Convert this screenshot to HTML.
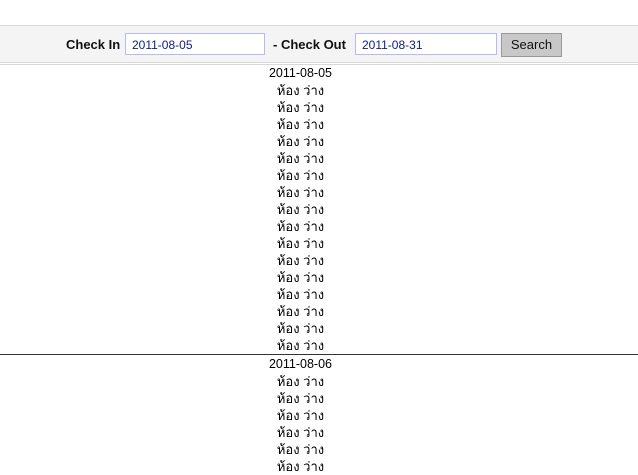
<!DOCTYPE html>
<html><head><meta charset="utf-8"><style>
body{margin:0;background:#fff;font-family:"Liberation Sans","DejaVu Sans",sans-serif;}
.bar{position:absolute;top:25px;left:0;width:638px;height:36px;background:#f4f4f4;border-top:1px solid #d8d8d8;border-bottom:1px solid #d8d8d8;}
.bar2{position:absolute;top:64px;left:0;width:638px;height:0;border-top:1px solid #d8d8d8;}
.lbl{position:absolute;top:37px;font-weight:bold;font-size:13px;color:#111;}
.inp{position:absolute;top:33px;width:140px;height:22px;border:1px solid #b8b8ff;background:#fff;font-size:12px;color:#102080;line-height:22px;padding-left:6px;box-sizing:border-box;}
.btn{position:absolute;top:33px;left:501px;width:61px;height:24px;background:#c8c8c8;border:1px solid #999;box-sizing:border-box;font-size:13px;text-align:center;line-height:22px;color:#111;}
.blk{position:absolute;left:0;width:601px;text-align:center;font-size:13px;line-height:17px;color:#000;}
.d{font-size:12.5px}
hr{position:absolute;left:0;top:354px;width:638px;margin:0;border:0;border-top:1px solid #333;}
</style></head><body>
<div class="bar"></div><div class="bar2"></div>
<div class="lbl" style="left:66px">Check In</div>
<div class="inp" style="left:125px">2011-08-05</div>
<div class="lbl" style="left:273px">- Check Out</div>
<div class="inp" style="left:355px;width:142px">2011-08-31</div>
<div class="btn">Search</div>
<div class="blk" style="top:64px"><span class="d">2011-08-05</span><br>ห้อง ว่าง<br>ห้อง ว่าง<br>ห้อง ว่าง<br>ห้อง ว่าง<br>ห้อง ว่าง<br>ห้อง ว่าง<br>ห้อง ว่าง<br>ห้อง ว่าง<br>ห้อง ว่าง<br>ห้อง ว่าง<br>ห้อง ว่าง<br>ห้อง ว่าง<br>ห้อง ว่าง<br>ห้อง ว่าง<br>ห้อง ว่าง<br>ห้อง ว่าง</div>
<hr>
<div class="blk" style="top:355px"><span class="d">2011-08-06</span><br>ห้อง ว่าง<br>ห้อง ว่าง<br>ห้อง ว่าง<br>ห้อง ว่าง<br>ห้อง ว่าง<br>ห้อง ว่าง</div>
</body></html>
